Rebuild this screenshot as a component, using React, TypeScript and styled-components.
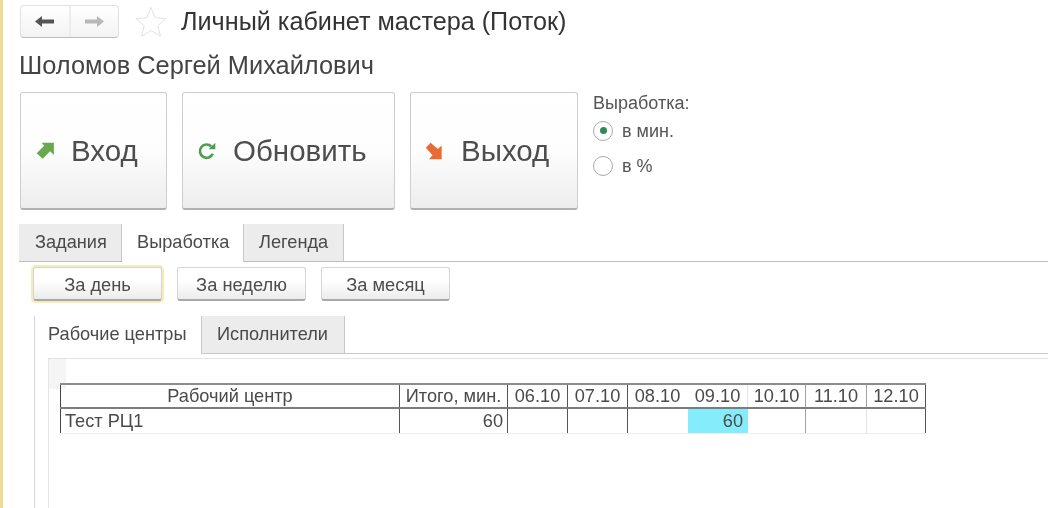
import styled, { createGlobalStyle } from 'styled-components';

const GlobalStyle = createGlobalStyle`
  html, body {
    margin: 0;
    padding: 0;
    background: #fff;
  }
  * {
    box-sizing: border-box;
  }
`;

const DARK = '#555';
const GRAY = '#a0a0a0';
const FAINT = '#e4e4e4';

const columns = [
  { date: '06.10', width: 60, head: DARK, body: DARK },
  { date: '07.10', width: 60, head: DARK, body: DARK },
  { date: '08.10', width: 60, head: 'transparent', body: 'transparent' },
  { date: '09.10', width: 60, head: FAINT, body: 'transparent', value: '60' },
  { date: '10.10', width: 58, head: GRAY, body: GRAY },
  { date: '11.10', width: 61, head: GRAY, body: FAINT },
  { date: '12.10', width: 59, head: DARK, body: DARK },
];

const App = () => {
  return (
    <Page>
      <GlobalStyle />
      <TopBar>
        <NavGroup>
          <NavButton>
            <svg width="19" height="13" viewBox="0 0 19 13">
              <path d="M0 6.5L7 1v3.5h12v4H7V12z" fill="#555" />
            </svg>
          </NavButton>
          <NavButton>
            <svg width="19" height="13" viewBox="0 0 19 13">
              <path d="M19 6.5L12 1v3.5H0v4h12V12z" fill="#b8b8b8" />
            </svg>
          </NavButton>
        </NavGroup>
        <StarIcon width="32" height="32" viewBox="0 0 32 32">
          <path
            d="M16 1.5l4.2 10.2 11 .8-8.4 7.1 2.7 10.7L16 24.5l-9.5 5.8 2.7-10.7L.8 12.5l11-.8z"
            fill="#fff"
            stroke="#e2e2e2"
          />
        </StarIcon>
        <Title>Личный кабинет мастера (Поток)</Title>
      </TopBar>
      <UserName>Шоломов Сергей Михайлович</UserName>
      <ActionRow>
        <ActionButton $width={147}>
          <svg width="20" height="20" viewBox="0 0 18 18">
            <path d="M6 1.5h11v11l-3.4-3.2L7 16 1.5 11l6.8-6.8z" fill="#6aa84f" />
          </svg>
          Вход
        </ActionButton>
        <ActionButton $width={213}>
          <svg width="20" height="20" viewBox="0 0 18 18">
            <path
              d="M14.2 11.5A6 6 0 1 1 13 5"
              fill="none"
              stroke="#4c9f50"
              strokeWidth="2.4"
            />
            <path d="M10.5 7.5h6v-6z" fill="#4c9f50" />
          </svg>
          Обновить
        </ActionButton>
        <ActionButton $width={168}>
          <svg width="20" height="20" viewBox="0 0 18 18">
            <path d="M5 1.5l6.6 5.7L15 4v12.5H3.5l3.3-3.6L.8 6z" fill="#ea6a35" />
          </svg>
          Выход
        </ActionButton>
        <RadioGroup>
          <RadioTitle>Выработка:</RadioTitle>
          <RadioRow>
            <RadioCircle $checked />в мин.
          </RadioRow>
          <RadioRow>
            <RadioCircle />в %
          </RadioRow>
        </RadioGroup>
      </ActionRow>
      <MainTabs>
        <Tab $width={103} $pad={16}>
          Задания
        </Tab>
        <Tab $width={122} $active>
          Выработка
        </Tab>
        <Tab $width={100}>Легенда</Tab>
      </MainTabs>
      <PeriodRow>
        <PeriodButton $focused>За день</PeriodButton>
        <PeriodButton>За неделю</PeriodButton>
        <PeriodButton>За месяц</PeriodButton>
      </PeriodRow>
      <InnerPanel>
        <InnerTabs>
          <Tab $width={167} $pad={13} $active>
            Рабочие центры
          </Tab>
          <Tab $width={143}>Исполнители</Tab>
        </InnerTabs>
        <GridArea>
          <GridCorner />
          <ReportTable>
            <thead>
              <tr>
                <HeadCell $width={339} $line={DARK} $first>
                  Рабочий центр
                </HeadCell>
                <HeadCell $width={108} $line={DARK}>
                  Итого, мин.
                </HeadCell>
                {columns.map((column) => (
                  <HeadCell key={column.date} $width={column.width} $line={column.head}>
                    {column.date}
                  </HeadCell>
                ))}
              </tr>
            </thead>
            <tbody>
              <tr>
                <BodyCell $line={DARK} $first>
                  Тест РЦ1
                </BodyCell>
                <BodyCell $line={DARK} $right>
                  60
                </BodyCell>
                {columns.map((column) => (
                  <BodyCell key={column.date} $line={column.body} $right $filled={!!column.value}>
                    {column.value}
                  </BodyCell>
                ))}
              </tr>
            </tbody>
          </ReportTable>
        </GridArea>
      </InnerPanel>
    </Page>
  );
};

const Page = styled.div`
  width: 1048px;
  height: 508px;
  padding-left: 17px;
  overflow: hidden;
  background: #fff;
  border-left: 3px solid #f0dc96;
  color: #444;
  font-family: 'Liberation Sans', Arial, sans-serif;
  filter: blur(0.45px);
`;

const TopBar = styled.div`
  display: flex;
  align-items: center;
  height: 33px;
  margin-top: 5px;
`;

const NavGroup = styled.div`
  display: flex;
  width: 99px;
  height: 33px;
  border: 1px solid #e2e2e2;
  border-bottom-color: #bcbcbc;
  border-radius: 4px;
  background: linear-gradient(#fff, #f3f3f3);
`;

const NavButton = styled.div`
  display: flex;
  flex: 1;
  align-items: center;
  justify-content: center;
  & + & {
    border-left: 2px solid #ececec;
  }
`;

const StarIcon = styled.svg`
  margin-left: 16px;
`;

const Title = styled.h1`
  margin: 0 0 0 14px;
  color: #333;
  font-weight: 400;
  font-size: 25.2px;
  line-height: 33px;
  white-space: nowrap;
`;

const UserName = styled.div`
  height: 54px;
  margin-left: -1px;
  padding-top: 14px;
  color: #444;
  font-size: 25.4px;
  line-height: 26px;
  white-space: nowrap;
`;

const ActionRow = styled.div`
  display: flex;
  gap: 15px;
  height: 118px;
`;

const ActionButton = styled.div<{ $width: number }>`
  display: flex;
  align-items: center;
  gap: 16px;
  width: ${(props) => props.$width}px;
  padding-left: 14px;
  color: #4d4d4d;
  font-size: 29.5px;
  background: linear-gradient(#fff 0%, #fdfdfd 50%, #ededed 100%);
  border: 1px solid #cecece;
  border-bottom: 2px solid #b0b0b0;
  border-radius: 3px;
  white-space: nowrap;
`;

const RadioGroup = styled.div`
  display: flex;
  flex-direction: column;
  color: #555;
  font-size: 18px;
`;

const RadioTitle = styled.div`
  height: 21px;
  padding-top: 1px;
  line-height: 20px;
`;

const RadioRow = styled.label`
  display: flex;
  align-items: center;
  gap: 9px;
  height: 35px;
  line-height: 20px;
`;

const RadioCircle = styled.span<{ $checked?: boolean }>`
  display: flex;
  align-items: center;
  justify-content: center;
  width: 20px;
  height: 20px;
  background: #fff;
  border: 1px solid #aaa;
  border-radius: 50%;
  &::after {
    content: '';
    display: ${(props) => (props.$checked ? 'block' : 'none')};
    width: 7px;
    height: 7px;
    background: #2e8b57;
    border-radius: 50%;
  }
`;

const MainTabs = styled.div`
  display: flex;
  height: 38px;
  margin: 14px 0 0 -1px;
  border-bottom: 1px solid #bdbdbd;
`;

const Tab = styled.div<{ $width: number; $pad?: number; $active?: boolean }>`
  width: ${(props) => props.$width}px;
  height: ${(props) => (props.$active ? '38px' : '37px')};
  padding-left: ${(props) => props.$pad ?? 15}px;
  color: #4a4a4a;
  font-size: 18.2px;
  line-height: 36px;
  background: ${(props) => (props.$active ? '#fff' : '#ececec')};
  border-right: 1px solid #c8c8c8;
  white-space: nowrap;
`;

const PeriodRow = styled.div`
  display: flex;
  gap: 15px;
  height: 34px;
  margin: 5px 0 0 13px;
`;

const PeriodButton = styled.div<{ $focused?: boolean }>`
  width: 129px;
  height: 34px;
  color: #4d4d4d;
  font-size: 18.3px;
  line-height: 33px;
  text-align: center;
  background: linear-gradient(#fff 40%, #ececec);
  border: 1px solid #d4d4d4;
  border-bottom: 2px solid #a8a8a8;
  border-radius: 3px;
  box-shadow: ${(props) => (props.$focused ? '0 0 0 2px #f6ecb4' : 'none')};
`;

const InnerPanel = styled.div`
  display: flex;
  flex-direction: column;
  height: 200px;
  margin: 15px 0 0 14px;
  border-left: 1px solid #d4d4d4;
`;

const InnerTabs = styled.div`
  display: flex;
  height: 38px;
  border-bottom: 1px solid #c8c8c8;
`;

const GridArea = styled.div`
  position: relative;
  flex: 1;
  margin: 4px 0 0 13px;
  padding: 24px 0 0 11px;
  border-top: 1px solid #e2e2e2;
  border-left: 1px solid #e6e6e6;
`;

const GridCorner = styled.div`
  position: absolute;
  top: 0;
  left: 0;
  width: 17px;
  height: 30px;
  background: #f5f5f5;
`;

const ReportTable = styled.table`
  position: relative;
  width: 865px;
  border-collapse: collapse;
  table-layout: fixed;
  font-size: 18.2px;
`;

const HeadCell = styled.th<{ $width: number; $line: string; $first?: boolean }>`
  width: ${(props) => props.$width}px;
  height: 24px;
  padding: 0;
  overflow: hidden;
  color: #4a4a4a;
  font-weight: 400;
  line-height: 21px;
  text-align: center;
  white-space: nowrap;
  border-top: 2px solid #8c8c8c;
  border-bottom: 2px solid #7c7c7c;
  border-left: ${(props) => (props.$first ? '1px solid #444' : '0')};
  border-right: 1px solid ${(props) => props.$line};
`;

const BodyCell = styled.td<{
  $line: string;
  $first?: boolean;
  $right?: boolean;
  $filled?: boolean;
}>`
  height: 25px;
  padding: 1px 4px 0;
  color: #4a4a4a;
  line-height: 21px;
  text-align: ${(props) => (props.$right ? 'right' : 'left')};
  background: ${(props) => (props.$filled ? '#85ecfc' : '#fff')};
  border-bottom: 1px solid #eee;
  border-left: ${(props) => (props.$first ? '1px solid #444' : '0')};
  border-right: 1px solid ${(props) => props.$line};
`;

export default App;
